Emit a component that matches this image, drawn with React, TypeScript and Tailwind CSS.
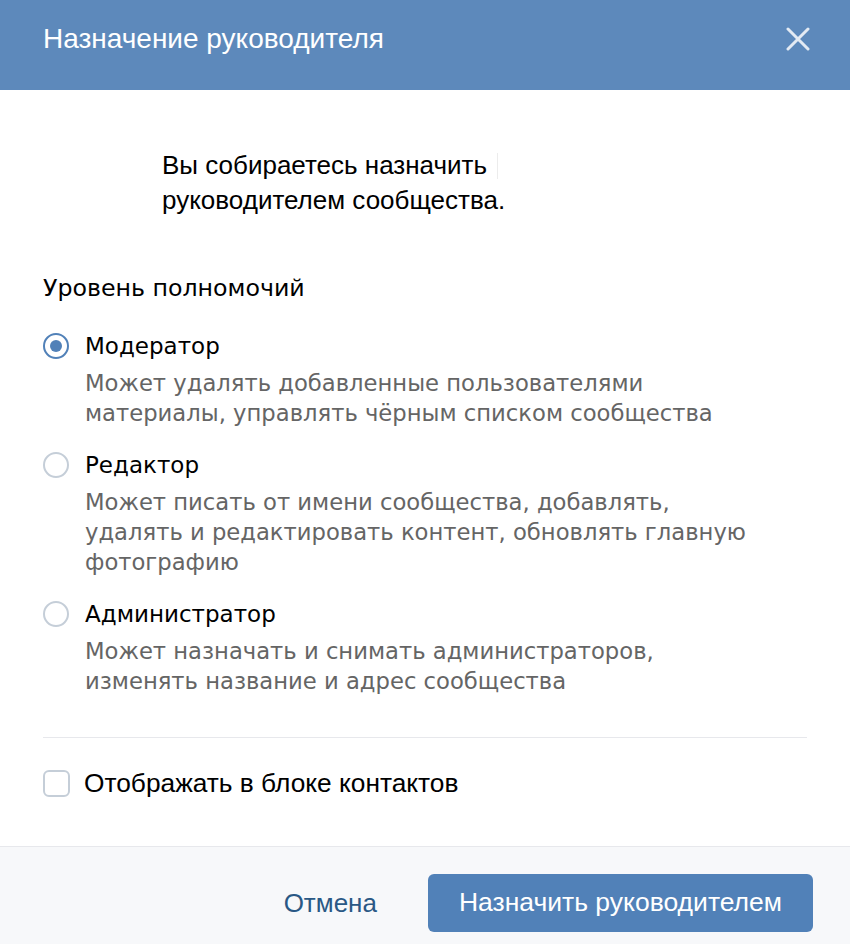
import React from 'react';

const helv = { fontFamily: '"Liberation Sans", Arial, sans-serif' };
const lucida = { fontFamily: '"DejaVu Sans", "Liberation Sans", sans-serif' };

const ROLES = [
    {
        id: 'moderator',
        title: 'Модератор',
        lines: ['Может удалять добавленные пользователями', 'материалы, управлять чёрным списком сообщества'],
    },
    {
        id: 'editor',
        title: 'Редактор',
        lines: [
            'Может писать от имени сообщества, добавлять,',
            'удалять и редактировать контент, обновлять главную',
            'фотографию',
        ],
    },
    {
        id: 'admin',
        title: 'Администратор',
        lines: ['Может назначать и снимать администраторов,', 'изменять название и адрес сообщества'],
    },
];

function Radio({ checked }: { checked: boolean }) {
    return (
        <span
            className={
                checked
                    ? 'flex h-[26px] w-[26px] shrink-0 items-center justify-center rounded-full border-2 border-[#5181b8]'
                    : 'flex h-[26px] w-[26px] shrink-0 items-center justify-center rounded-full border-2 border-[#c5ced8]'
            }
        >
            {checked && <span className="h-[12px] w-[12px] rounded-full bg-[#5181b8]" />}
        </span>
    );
}

export default function App() {
    const selected = 'moderator';

    return (
        <div className="flex h-[944px] w-[850px] flex-col bg-white">
            {/* Header */}
            <div className="flex h-[90px] shrink-0 items-center justify-between bg-[#5d89bb] pb-[13px] pl-[43px] pr-[40px]">
                <h1 className="text-[28px] leading-[32px] text-white" style={helv}>
                    Назначение руководителя
                </h1>
                <svg width="24" height="24" viewBox="0 0 24 24" className="text-[#e3eaf3]">
                    <path d="M2 2 L22 22 M22 2 L2 22" stroke="currentColor" strokeWidth="3" strokeLinecap="round" />
                </svg>
            </div>

            {/* Body */}
            <div className="flex-1 px-[43px]">
                <div className="pl-[119px] pt-[58px] text-[26px] leading-[35px] text-black" style={helv}>
                    <div className="flex items-center">
                        Вы собираетесь назначить
                        <span className="ml-[10px] h-[26px] w-px bg-[#ececec]" />
                    </div>
                    <div>руководителем сообщества.</div>
                </div>

                <h2 className="mt-[55px] text-[23.7px] leading-[30px] text-black" style={lucida}>
                    Уровень полномочий
                </h2>

                <div className="mt-[28px] flex flex-col gap-[22px]">
                    {ROLES.map((role) => (
                        <div key={role.id} className="flex flex-col">
                            <div className="flex items-center gap-[16px]">
                                <Radio checked={role.id === selected} />
                                <span className="text-[23px] leading-[30px] text-black" style={lucida}>
                                    {role.title}
                                </span>
                            </div>
                            <div className="mt-[7px] pl-[42px] text-[22.7px] leading-[30px] text-[#656565]" style={lucida}>
                                {role.lines.map((line) => (
                                    <div key={line} className="whitespace-nowrap">
                                        {line}
                                    </div>
                                ))}
                            </div>
                        </div>
                    ))}
                </div>

                <div className="mt-[41px] h-px bg-[#e7e8ec]" />

                <label className="mt-[30px] flex items-center gap-[14px]">
                    <span className="h-[27px] w-[27px] rounded-[6px] border-2 border-[#c5ced8]" />
                    <span className="text-[26.3px] leading-[30px] text-black" style={helv}>
                        Отображать в блоке контактов
                    </span>
                </label>
            </div>

            {/* Footer */}
            <div className="flex h-[98px] shrink-0 items-start justify-end gap-[51px] border-t border-[#e7e8ec] bg-[#f7f8fa] pr-[37px] pt-[27px]">
                <button className="h-[58px] text-[26px] text-[#2a5885]" style={helv}>
                    Отмена
                </button>
                <button
                    className="h-[58px] rounded-[6px] bg-[#5181b8] px-[31px] text-[26.5px] text-white"
                    style={helv}
                >
                    Назначить руководителем
                </button>
            </div>
        </div>
    );
}
